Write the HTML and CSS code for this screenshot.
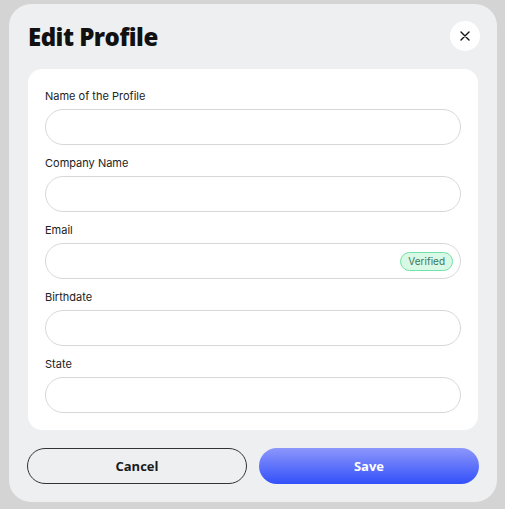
FILE: index.html
```html
<!DOCTYPE html>
<html lang="en">
<head>
<meta charset="utf-8">
<title>Edit Profile</title>
<link rel="stylesheet" href="styles.css">
</head>
<body>
<div class="modal">
  <div class="header">
    <h1 class="title">Edit Profile</h1>
    <button class="close" aria-label="Close">
      <svg width="10" height="10" viewBox="0 0 10 10"><path d="M1 1L9 9M9 1L1 9" stroke="#111" stroke-width="1.4" stroke-linecap="round"/></svg>
    </button>
  </div>
  <div class="card">
    <div class="field">
      <label class="label">Name of the Profile</label>
      <div class="input"></div>
    </div>
    <div class="field">
      <label class="label">Company Name</label>
      <div class="input"></div>
    </div>
    <div class="field">
      <label class="label">Email</label>
      <div class="input"><span class="badge">Verified</span></div>
    </div>
    <div class="field">
      <label class="label">Birthdate</label>
      <div class="input"></div>
    </div>
    <div class="field">
      <label class="label">State</label>
      <div class="input"></div>
    </div>
  </div>
  <div class="actions">
    <button class="btn btn-cancel">Cancel</button>
    <button class="btn btn-save">Save</button>
  </div>
</div>
</body>
</html>
```
FILE: styles.css
```css
* { box-sizing: border-box; }
html, body { margin: 0; padding: 0; }
body {
  background: #d4d4d4;
  width: 505px;
  height: 509px;
  padding: 4px 8px 7px 9px;
  font-family: Inter, "Liberation Sans", sans-serif;
}
.modal {
  width: 488px;
  height: 498px;
  background: #eeeff1;
  border-radius: 22px;
  padding: 17px 18px 18px 18px;
  display: flex;
  flex-direction: column;
}
.header {
  height: 30px;
  display: flex;
  align-items: center;
  justify-content: space-between;
  padding-left: 1px;
  margin-bottom: 18px;
}
.title {
  margin: 0;
  font-family: "Open Sans", sans-serif;
  font-weight: 800;
  font-size: 24px;
  letter-spacing: -0.5px;
  color: #111;
}
.close {
  width: 30px;
  height: 30px;
  border-radius: 50%;
  border: none;
  background: #fff;
  display: flex;
  align-items: center;
  justify-content: center;
  padding: 0;
  margin-right: -1px;
}
.card {
  background: #fff;
  border-radius: 14px;
  margin: 0 1px;
  padding: 20px 17px 17px 17px;
  display: flex;
  flex-direction: column;
  gap: 11px;
}
.field {
  display: flex;
  flex-direction: column;
  gap: 6px;
}
.label {
  font-size: 11px;
  line-height: 14px;
  color: #222;
}
.input {
  height: 36px;
  border: 1px solid #d8d8d8;
  border-radius: 18px;
  display: flex;
  align-items: center;
  justify-content: flex-end;
  padding-right: 7px;
}
.badge {
  height: 19px;
  padding: 0 7px;
  border-radius: 10px;
  background: #d7f9e6;
  border: 1px solid #72e3a6;
  color: #3f7558;
  font-size: 10px;
  line-height: 17px;
}
.actions {
  margin-top: 18px;
  display: grid;
  grid-template-columns: 1fr 1fr;
  gap: 12px;
}
.btn {
  height: 36px;
  border-radius: 18px;
  font-family: "Open Sans", sans-serif;
  font-weight: 700;
  font-size: 13px;
}
.btn-cancel {
  background: transparent;
  border: 1px solid #333;
  color: #1a1a1a;
}
.btn-save {
  border: none;
  color: #fff;
  background: linear-gradient(180deg, #8d97fb 0%, #3350fa 100%);
}
```
